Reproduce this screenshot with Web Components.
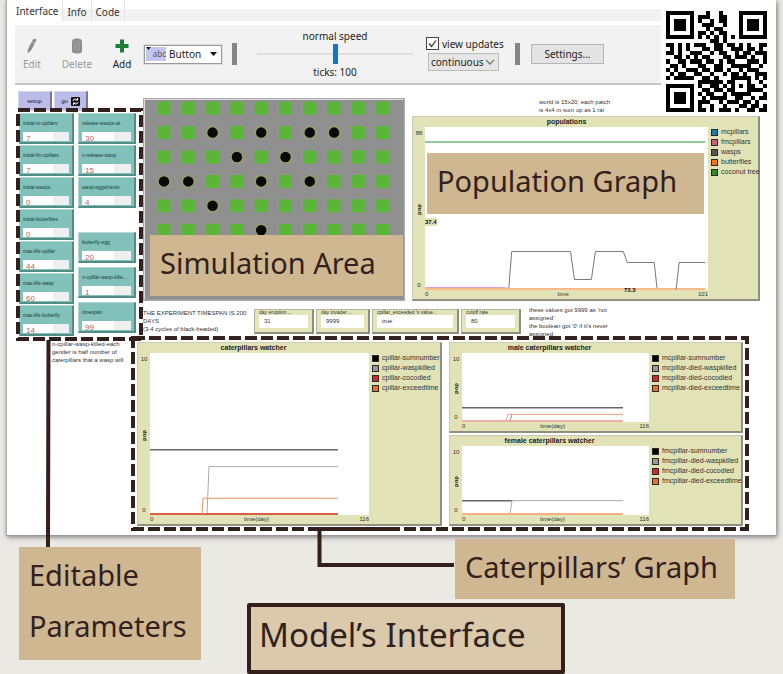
<!DOCTYPE html>
<html lang="en">
<head>
<meta charset="utf-8">
<title>Model's Interface</title>
<style>
  html, body { margin: 0; background: #ebe9e4; }
  body { font-family: "Noto Sans", "Open Sans", sans-serif; color: #331f1c; }
</style>
</head>
<body>
<model-slide></model-slide>
<script>
const define = (name, html, init) => {
  const t = document.createElement('template');
  t.innerHTML = html;
  customElements.define(name, class extends HTMLElement {
    connectedCallback() {
      if (this.shadowRoot) return;
      this.attachShadow({ mode: 'open' }).append(t.content.cloneNode(true));
      if (init) init(this, this.shadowRoot);
    }
  });
};

/* Dashed outline round a group of widgets */
define('dash-frame', `<style>
  :host { display: block; position: absolute; pointer-events: none; }
  svg { display: block; width: 100%; height: 100%; }
  rect { x: 2px; y: 2px; width: calc(100% - 4px); height: calc(100% - 4px);
    fill: none; stroke: #331f1c; stroke-width: 4px; stroke-dasharray: 12 4; }
</style><svg aria-hidden="true"><rect/></svg>`);

define('callout-label', `<style>
  :host { display: block; box-sizing: border-box; position: absolute; background: #cfb791; color: #331f1c;
    font-size: 29px; line-height: 56px; padding: 0 10px; white-space: nowrap; }
</style><slot></slot>`);

define('qr-code', `<style>
  :host { display: block; background: #fff; padding: 11px 8px 4px 5px; box-sizing: border-box; }
  svg { display: block; width: 101px; height: 101px; }
</style><svg viewBox="0 0 25 25" shape-rendering="crispEdges" role="img" aria-label="QR code"><path/></svg>`,
(el, r) => {
  const rows = [
    '1111111000100100001111111',
    '1000001011100110001000001',
    '1011101010010110001011101',
    '1011101001110010001011101',
    '1011101000101100001011101',
    '1000001011010110001000001',
    '1111111010101010101111111',
    '0000000000011010000000000',
    '1101010111001101101010011',
    '0101010001101100111011010',
    '1101001110010110010110111',
    '0011010101100011011101001',
    '1001101110110101100011101',
    '0110100011001100111110010',
    '1010011101101101001011100',
    '0101100110010010110100111',
    '1011111001101000111110101',
    '0000000011111101100010010',
    '1111111010011010101011001',
    '1000001001101101100011110',
    '1011101010110010111110001',
    '1011101001011110011001011',
    '1011101011100101110110100',
    '1000001010010010001101101',
    '1111111011010111010011011'];
  let d = '';
  rows.forEach((row, y) => [...row].forEach((c, x) => { if (c === '1') d += `M${x} ${y}h1v1h-1z`; }));
  r.querySelector('path').setAttribute('d', d);
});

define('tab-strip', `<style>
  :host { display: flex; align-items: stretch; height: 21px; background: linear-gradient(#fff 9px, #f2f2f2 9px);
    font-size: 10px; line-height: 11px; }
  button { font: inherit; color: #333; border: 0; border-right: 1px solid #e2e2e2; background: none; padding: 4px 4px 0; }
  button[aria-selected=true] { background: #fff; padding: 2px 4px 0 1px; }
</style><button role="tab" aria-selected="true">Interface</button><button role="tab">Info</button><button role="tab">Code</button>`);

define('tool-button', `<style>
  :host { display: block; }
  button { display: flex; flex-direction: column; align-items: center; gap: 4px; width: 44px; padding: 0; border: 0; background: none;
    font: inherit; color: #222; }
  :host([dim]) button { color: #999; }
</style><button><slot name="icon"></slot><slot></slot></button>`);

define('main-toolbar', `<style>
  :host { display: flex; align-items: center; box-sizing: border-box; height: 60px; margin-top: 4px; background: #f2f2f2;
    border-bottom: 2px solid #c6c6c6; font-size: 10px; line-height: 12px; color: #222; }
  svg { display: block; }
  .tools { display: flex; gap: 1px; }
  select, .set { font: inherit; color: inherit; box-sizing: border-box; }
  .kind { display: flex; align-items: center; box-sizing: border-box; width: 78px; height: 19px; border: 1px solid #9a9a9a; outline: 1px solid #ddd; background: #fff; }
  .kind svg { flex: none; }
  .kind span { font-size: 8px; line-height: 14px; width: 20px; margin: 1px; background: #c5c4ee; color: #555; text-align: right; }
  .kind select { flex: 1; appearance: none; border: 0; background: none; padding: 0 2px; min-width: 0; }
  .sep { width: 5px; height: 22px; background: #858585; }
  .speed { display: flex; flex-direction: column; align-items: center; width: 156px; margin: 0 13px 0 20px; }
  input[type=range] { appearance: none; width: 100%; height: 24px; margin: 0; background: linear-gradient(#dedede, #dedede) center / 100% 2px no-repeat; }
  input[type=range]::-webkit-slider-thumb { appearance: none; width: 5px; height: 20px; background: #1374d0; }
  .upd { display: flex; flex-direction: column; gap: 3px; width: 78px; }
  label { display: flex; align-items: center; gap: 3px; white-space: nowrap; }
  input[type=checkbox] { appearance: none; box-sizing: border-box; width: 13px; height: 13px; margin: 0; border: 1px solid #444; background: #fff; }
  .box { display: grid; } .box > * { grid-area: 1 / 1; }
  .cont { display: grid; width: 71px; margin-left: 2px; }
  .cont > * { grid-area: 1 / 1; }
  .cont select { appearance: none; height: 18px; padding: 0 2px; border: 1px solid #bbb; background: #e6e6e6; border-radius: 0; }
  .cont svg { justify-self: end; align-self: center; margin-right: 4px; pointer-events: none; }
  .set { width: 73px; height: 20px; padding: 0; border: 1px solid #b5b5b5; background: #e3e3e3; margin-left: 11px; }
</style>
<div class="tools">
<tool-button dim style="margin-left:-5px"><svg slot="icon" width="12" height="16" viewBox="0 0 12 16"><path d="M7 1.500Q9 0 10.500 2L5 12.500 1.500 15.500 2 11z" fill="#8b8b8b"/><path d="M6.500 4l2.500 1.500" stroke="#ccc"/></svg>Edit</tool-button>
<tool-button dim><svg slot="icon" width="12" height="16" viewBox="0 0 12 16"><path d="M1 3.500Q1 .5 6 .5t5 3V13q0 2.500-5 2.500T1 13z" fill="#8d8d8d"/><path d="M3.500 5v8M6 5v9M8.500 5v8M1 4h10" stroke="#a5a5a5" stroke-width=".8"/></svg>Delete</tool-button>
<tool-button><svg slot="icon" width="14" height="16" viewBox="0 0 14 16"><path d="M5 1.500h4v4.500h4.500v4H9v4.500H5V10H.5V6H5z" fill="#1c7f35"/></svg>Add</tool-button>
</div>
<div class="kind"><span><svg width="5" height="3" style="float:left"><path d="M0 0h5L2.500 3z" fill="#223"/></svg>abc</span><select aria-label="Widget kind"><option>Button</option></select><svg width="14" height="6"><path d="M3 1h7L6.500 5z" fill="#111"/></svg></div>
<div class="sep" style="margin-left:10px"></div>
<div class="speed"><label for="sp">normal speed</label><input id="sp" type="range"><span>ticks: 100</span></div>
<div class="upd"><label><span class="box"><input type="checkbox" checked><svg width="13" height="13"><path d="M3 6.500l2.500 3L10 3.500" fill="none" stroke="#333" stroke-width="1.200"/></svg></span>view updates</label>
<div class="cont"><select aria-label="Update mode"><option>continuous</option></select><svg width="10" height="6"><path d="M1 1l4 4 4-4" fill="none" stroke="#777" stroke-width="1.300"/></svg></div></div>
<div class="sep" style="margin-left:11px"></div>
<button class="set">Settings...</button>`);

define('run-button', `<style>
  :host { display: block; width: 34px; }
  button { display: flex; align-items: center; justify-content: center; gap: 3px; box-sizing: border-box; width: 100%; height: 20px; padding: 0;
    font: 6px/8px "Liberation Sans", Arial, sans-serif; color: #223; background: #bdbbe8; border: 1px solid #d6d6ea; border-right: 2px solid #77779b; }
</style><button><slot></slot></button>`);

define('param-input', `<style>
  :host { display: block; box-sizing: border-box; height: 31px; padding: 5px 3px 0; background: #82c1ba;
    border: 1px solid #b5d8d4; border-right: 2px solid #518c86; border-bottom: 2px solid #518c86; }
  label { display: block; font: 5px/8px "Liberation Sans", Arial, sans-serif; color: #163c3a; white-space: nowrap; overflow: hidden; }
  input { display: block; box-sizing: border-box; width: 100%; height: 9px; margin-top: 5px; padding: 3px 3px 0; border: 0; overflow: hidden;
    background: linear-gradient(90deg, #fff 66%, #eef0f0 66%); color: #c4614c; font: 8px/9px "Liberation Sans", Arial, sans-serif; }
</style><label for="v"></label><input id="v">`, (el, r) => {
  r.querySelector('label').textContent = el.getAttribute('name');
  r.querySelector('input').setAttribute('value', el.getAttribute('value'));
});

define('value-monitor', `<style>
  :host { display: block; box-sizing: border-box; height: 25px; padding: 0 4px; background: #e3e4b8; color: #333; overflow: hidden;
    border: 1px solid #b4b4a4; border-right: 2px solid #8d8d80; border-bottom: 2px solid #8d8d80; font: 6px/8px "Liberation Sans", Arial, sans-serif; }
  div { height: 5px; line-height: 4px; overflow: hidden; white-space: nowrap; font-size: 5px; }
  output { display: block; height: 13px; line-height: 12px; padding-left: 5px; background: #fff; }
</style><div></div><output><slot></slot></output>`, (el, r) => { r.querySelector('div').textContent = el.getAttribute('name'); });

define('world-view', `<style>
  :host { display: block; box-sizing: border-box; border: 2px solid #ddd; border-right-color: #9a9a9e; border-bottom-color: #9a9a9e; outline: 1px solid #aaa; outline-offset: -1px; background: #909090; }
  svg { display: block; width: 100%; height: 100%; }
</style><svg viewBox="0 0 258 199" role="img" aria-label="World view"><g/></svg>`, (el, r) => {
  const trees = new Set(['2,1','4,1','6,1','7,1','3,2','5,2','0,3','1,3','4,3','6,3','2,4','4,5']);
  let s = '';
  for (let y = 0; y < 6; y++) for (let x = 0; x < 10; x++) {
    const cx = 19 + x * 24.3, cy = 8 + y * 24.4;
    s += trees.has(x + ',' + y)
      ? `<circle cx="${cx}" cy="${cy}" r="6" fill="#0a0906" stroke="#96a06a" stroke-width="1.500"/>`
      : `<rect x="${cx - 6.5}" y="${cy - 6.5}" width="13" height="13" fill="#5ab637"/>`;
  }
  r.querySelector('g').innerHTML = s;
});

/* Plot: <plot-pen> children carry the pens; a pen with a label is listed in the legend */
define('net-plot', `<style>
  :host { display: grid; box-sizing: border-box; grid-template: 10px minmax(0, 1fr) 9px / 12px 1fr var(--legend, 92px); background: #e1e2b6;
    border: 1px solid #c9c9b6; border-right: 2px solid #8f8f82; border-bottom: 2px solid #8f8f82;
    font: 6px/9px "Liberation Sans", Arial, sans-serif; color: #333; min-width: 0; min-height: 0; }
  h3 { grid-column: 1 / 3; margin: 0; font: bold 7px/10px "Liberation Sans", Arial, sans-serif; text-align: center; color: #222; }
  :host([wide]) h3 { grid-column: 1 / 4; padding-right: 38px; }
  .y { grid-area: 2 / 1; display: flex; flex-direction: column; align-items: center; justify-content: space-between; padding-top: 2px; }
  .y b { writing-mode: vertical-rl; transform: rotate(180deg); color: #222; }
  .area { grid-area: 2 / 2; display: block; width: 100%; height: 100%; background: #fff; min-height: 0; }
  .x { grid-area: 3 / 2; display: flex; justify-content: space-between; }
  ul { grid-area: 2 / 3; list-style: none; margin: 0; padding: 0 0 0 3px; font-size: 7px; line-height: 10px; }
  li { display: flex; gap: 3px; align-items: center; white-space: nowrap; }
  i { box-sizing: border-box; width: 7px; height: 7px; border: 1px solid #2a2a2a; flex: none; }
</style><h3></h3><div class="y"><span class="max"></span><b>pop</b><span>0</span></div>
<svg class="area" preserveAspectRatio="none" aria-hidden="true"></svg><div class="x"><span>0</span><span class="xl"></span><span class="xm"></span></div><ul></ul>`,
(el, r) => {
  const g = n => el.getAttribute(n);
  r.querySelector('h3').textContent = g('name');
  r.querySelector('.max').textContent = g('ymax');
  r.querySelector('.xl').textContent = g('xlabel');
  r.querySelector('.xm').textContent = g('xmax');
  const svg = r.querySelector('svg');
  svg.setAttribute('viewBox', g('view'));
  let lines = '', list = '';
  for (const p of el.querySelectorAll('plot-pen')) {
    const c = p.getAttribute('color');
    if (p.getAttribute('points')) lines += `<polyline points="${p.getAttribute('points')}" fill="none" stroke="${p.getAttribute('line') || c}" stroke-width="${p.getAttribute('w') || 1}" vector-effect="non-scaling-stroke"/>`;
    if (p.getAttribute('label')) list += `<li><i style="background:${c}"></i>${p.getAttribute('label')}</li>`;
  }
  svg.innerHTML = lines;
  r.querySelector('ul').innerHTML = list;
});

define('model-canvas', `<style>
  :host { display: grid; grid-template-columns: 118px 1fr; gap: 1px; padding: 6px 0 9px 11px; }
  .note { font: 6px/8px "Liberation Sans", Arial, sans-serif; color: #333; margin: 0; white-space: nowrap; }
  .run { display: flex; gap: 2px; padding-bottom: 2px; }
  .params { display: grid; grid-template-columns: 55px 58px; gap: 4px; padding-left: 1px; }
  .col { display: flex; flex-direction: column; gap: 1px; }
  .low { display: flex; flex-direction: column; gap: 4px; margin-top: 23px; }
  .right { display: flex; flex-direction: column; min-width: 0; }
  .top { display: grid; grid-template-columns: 262px 1fr; gap: 7px; height: 203px; padding: 7px 16px 0 6px; }
  .pop { display: grid; grid-template-rows: 18px 1fr; min-width: 0; }
  .mon { display: grid; grid-template-columns: 109px 60px 54px 87px 60px 1fr; gap: 2px; padding: 8px 0 0 6px; height: 41px; box-sizing: border-box; }
  .watch { display: grid; grid-template: minmax(0, 1fr) / 305fr 294fr; gap: 7px; padding: 0 33px 0 0; height: 184px; }
  .two { display: grid; grid-template-rows: repeat(2, minmax(0, 1fr)); gap: 2px; min-width: 0; min-height: 0; }
</style>
<div>
  <div class="run"><run-button>setup</run-button><run-button>go <svg width="9" height="9" viewBox="0 0 9 9"><rect width="9" height="9" rx="1" fill="#111"/><path d="M2 4Q2 2 4.500 2L6.500 3M7 5Q7 7 4.500 7L2.500 6M6.500 1v2h-2M2.500 8V6h2" fill="none" stroke="#fff"/></svg></run-button></div>
  <div class="params">
    <div class="col">
      <param-input name="initial-m-cpillars" value="7"></param-input><param-input name="initial-fm-cpillars" value="7"></param-input>
      <param-input name="initial-wasps" value="0"></param-input><param-input name="initial-butterflies" value="0"></param-input>
      <param-input name="max-life-cpillar" value="44"></param-input><param-input name="max-life-wasp" value="60"></param-input>
      <param-input name="max-life-butterfly" value="14"></param-input>
    </div>
    <div class="col">
      <param-input name="release-wasps-at" value="30"></param-input><param-input name="n-release-wasp" value="15"></param-input>
      <param-input name="wasp-eggs/nests" value="4"></param-input>
      <div class="low"><param-input name="butterfly-egg" value="20"></param-input><param-input name="n-cpillar-wasp-kille..." value="1"></param-input>
      <param-input name="timespan" value="99"></param-input></div>
    </div>
  </div>
  <p class="note" style="padding:4px 0 0 34px">n-cpillar-wasp-killed-each<br>gender is half number of<br>caterpillars that a wasp will</p>
</div>
<div class="right">
  <div class="top">
    <world-view></world-view>
    <div class="pop"><p class="note" style="padding-left:127px">world is 15x20, each patch<br>is 4x4 m sum up as 1 rai</p>
    <net-plot wide name="populations" ymax="88" xmax="101" xlabel="time" view="0 0 284 164" style="--legend:50px">
      <plot-pen label="mcpillars" color="#1d78b4"></plot-pen>
      <plot-pen label="fmcpillars" color="#c9607f" line="#d99aca" points="0,161 80,161 86,163"></plot-pen>
      <plot-pen label="wasps" color="#55555a" line="#77777c" points="84,163 87,125 146,125 150,153 167,153 171,125 199,125 203,136 230,136 233,163"></plot-pen>
      <plot-pen label="butterflies" color="#f0701c" line="#f8b98a" w="3" points="0,163 281,163"></plot-pen>
      <plot-pen label="coconut tree" color="#2b8a2c" line="#6dba77" w="1.500" points="0,15 281,15"></plot-pen>
      <plot-pen line="#77777c" points="252,163 255,136 281,136"></plot-pen>
    </net-plot></div>
  </div>
  <div class="mon">
    <p class="note">THE EXPERIMENT TIMESPAN IS 200<br>DAYS<br>(3-4 cycles of black-headed)</p>
    <value-monitor name="day eruption ...">31</value-monitor><value-monitor name="day invader ...">9999</value-monitor>
    <value-monitor name="cpillar_exceeded 's value...">true</value-monitor><value-monitor name="cutoff rate">80</value-monitor>
    <p class="note" style="padding-left:6px;margin-top:-3px">these values got 9999 as 'not<br>assigned'<br>the boolean got '0' if it's never<br>assigned</p>
  </div>
  <div class="watch">
    <net-plot name="caterpillars watcher" ymax="10" xmax="116" xlabel="time(day)" view="0 0 219 164" style="--legend:71px">
      <plot-pen label="cpillar-sumnumber" color="#000" line="#66666c" w="1.500" points="0,98 188,98"></plot-pen>
      <plot-pen label="cpillar-waspkilled" color="#96969b" line="#aaaaae" points="57,163 59,115 188,115"></plot-pen>
      <plot-pen label="cpillar-cocodied" color="#d8262b" line="#dc5f48" w="2" points="0,163 188,163"></plot-pen>
      <plot-pen label="cpillar-exceedtime" color="#f0701c" line="#f3945c" points="52,163 53,147 188,147"></plot-pen>
    </net-plot>
    <div class="two">
      <net-plot name="male caterpillars watcher" ymax="10" xmax="116" xlabel="time(day)" view="0 0 187 72">
        <plot-pen label="mcpillar-sumnumber" color="#000" line="#66666c" w="1.500" points="0,57 161,57"></plot-pen>
        <plot-pen label="mcpillar-died-waspkilled" color="#96969b" line="#8888a8" points="48,71 50,64"></plot-pen>
        <plot-pen label="mcpillar-died-cocodied" color="#d8262b" line="#e4604c" points="0,71 161,71"></plot-pen>
        <plot-pen label="mcpillar-died-exceedtime" color="#f0701c" line="#f69a7a" points="44,71 46,64 161,64"></plot-pen>
      </net-plot>
      <net-plot name="female caterpillars watcher" ymax="10" xmax="116" xlabel="time(day)" view="0 0 187 72">
        <plot-pen label="fmcpillar-sumnumber" color="#000" line="#66666c" w="1.500" points="0,57 50,57"></plot-pen>
        <plot-pen label="fmcpillar-died-waspkilled" color="#96969b" line="#aaaaae" points="48,71 50,57 161,57"></plot-pen>
        <plot-pen label="fmcpillar-died-cocodied" color="#d8262b"></plot-pen>
        <plot-pen label="fmcpillar-died-exceedtime" color="#f0701c" line="#f5b083" w="2" points="0,71 161,71"></plot-pen>
      </net-plot>
    </div>
  </div>
</div>`);

define('model-slide', `<style>
  :host { display: block; position: relative; min-height: 674px; overflow: hidden; }
  .card { margin: 0 7px 0 6px; background: #fff; border-bottom: 1px solid #999; border-left: 1px solid #aaa; box-sizing: border-box; box-shadow: 1px 1px 5px #777; }
  .head { display: grid; grid-template-columns: 1fr 115px; height: 85px; padding-left: 8px; }
  qr-code { height: 115px; z-index: 1; }
  .title { position: absolute; left: 247px; top: 603px; box-sizing: border-box; width: 318px; height: 71px; margin: 0; border: 4px solid #331f1c; border-radius: 2px;
    background: #dbc9ab; padding-left: 8px; font-size: 33px; font-weight: 400; line-height: 56px; white-space: nowrap; }
  .wires { position: absolute; left: 0; top: 0; pointer-events: none; }
  .mark { position: absolute; font: bold 6px/8px "Liberation Sans", Arial, sans-serif; color: #111; background: #e1e2b6; }
</style>
<main class="card">
  <div class="head"><div><tab-strip></tab-strip><main-toolbar></main-toolbar></div><qr-code></qr-code></div>
  <model-canvas></model-canvas>
</main>
<span class="mark" style="left:425px;top:218px">37.4</span><span class="mark" style="left:624px;top:286px;background:none">73.3</span>
<dash-frame style="left:16px;top:108px;width:127px;height:233px"></dash-frame>
<dash-frame style="left:131px;top:336px;width:618px;height:195px"></dash-frame>
<svg class="wires" width="460" height="570" aria-hidden="true"><path d="M48.500 340 48 548M312 529H400M319.500 529V565H454" fill="none" stroke="#331f1c" stroke-width="4"/></svg>
<callout-label style="left:150px;top:235px;width:253px;height:61px">Simulation Area</callout-label>
<callout-label style="left:427px;top:153px;width:277px;height:61px">Population Graph</callout-label>
<callout-label style="left:455px;top:539px;width:280px;height:60px">Caterpillars’ Graph</callout-label>
<callout-label style="left:19px;top:547px;width:182px;height:113px;line-height:51px;padding-top:2px">Editable<br>Parameters</callout-label>
<h1 class="title">Model’s Interface</h1>`);
</script>
</body>
</html>
